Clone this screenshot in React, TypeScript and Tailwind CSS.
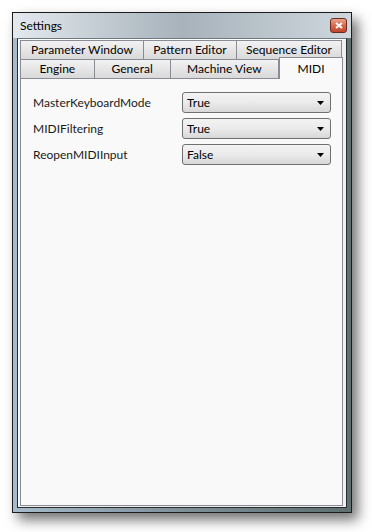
import React from "react";

const font = { fontFamily: 'Lato, "Noto Sans", sans-serif' };

function Tab({ label, w, selected }: { label: string; w: string; selected?: boolean }) {
  return (
    <div
      className={
        selected
          ? `${w} h-[22px] -mt-[2px] -mb-[1px] relative z-10 bg-[#f9f9f9] border border-b-0 border-[#898c95] flex items-center justify-center text-[12px] text-black`
          : `${w} h-[20px] bg-gradient-to-b from-[#f2f2f2] to-[#d9d9d9] border border-[#898c95] -ml-px first:ml-0 flex items-center justify-center text-[12px] text-black`
      }
    >
      {label}
    </div>
  );
}

function Select({ value }: { value: string }) {
  return (
    <div className="w-[149px] h-[21px] rounded-[3px] border border-[#707070] bg-gradient-to-b from-[#f3f3f3] via-[#ebebeb] to-[#d8d8d8] flex items-center justify-between pl-[4px] pr-[6px] text-[12px] text-black">
      <span>{value}</span>
      <svg width="7" height="4" viewBox="0 0 7 4">
        <path d="M0 0 H7 L3.5 4 Z" fill="#000" />
      </svg>
    </div>
  );
}

export default function App() {
  const rows = [
    ["MasterKeyboardMode", "True"],
    ["MIDIFiltering", "True"],
    ["ReopenMIDIInput", "False"],
  ];
  return (
    <div className="w-[372px] h-[532px] bg-white pt-[12px] pl-[12px]" style={font}>
      <div className="w-[340px] h-[501px] border border-[#1c1c1c] bg-gradient-to-r from-[#a6bccd] via-[#7f9099] to-[#5e7070] shadow-[6px_7px_12px_rgba(0,0,0,0.55)] flex flex-col">
        <div className="h-[25px] flex items-center justify-between pl-[7px] pr-[4px] bg-gradient-to-r from-[#e3e9ee] via-[#a7b2ba] to-[#cfd7dd]">
          <span className="text-[12px] text-black">Settings</span>
          <div className="w-[17px] h-[15px] rounded-[3px] border border-[#6a2a1c] bg-gradient-to-b from-[#e9a48c] via-[#d56a4c] to-[#c0452c] flex items-center justify-center">
            <svg width="8" height="7" viewBox="0 0 8 7">
              <path d="M1 1 L7 6 M7 1 L1 6" stroke="#fff" strokeWidth="1.8" />
            </svg>
          </div>
        </div>
        <div className="flex-1 mx-[4px] mb-[4px] border border-[#2a2a2a] bg-[#f0f0f0] border-t-[#6d7a82]">
          <div className="h-full border-l border-t border-white pl-[1px] pr-[3px] pt-[0px] pb-[1px] flex flex-col">
            <div className="flex pt-[0px]">
              <Tab label="Parameter Window" w="w-[124px]" />
              <Tab label="Pattern Editor" w="w-[94px]" />
              <Tab label="Sequence Editor" w="w-[106px]" />
            </div>
            <div className="flex -mt-px">
              <Tab label="Engine" w="w-[75px]" />
              <Tab label="General" w="w-[77px]" />
              <Tab label="Machine View" w="w-[110px]" />
              <Tab label="MIDI" w="w-[64px]" selected />
            </div>
            <div className="flex-1 -mt-px border border-[#898c95] bg-[#f9f9f9] pt-[13px] pl-[12px]">
              <div className="flex flex-col gap-[5px]">
                {rows.map(([k, v]) => (
                  <div key={k} className="flex items-center">
                    <span className="w-[149px] text-[12px] text-[#1a1a1a]">{k}</span>
                    <Select value={v} />
                  </div>
                ))}
              </div>
            </div>
          </div>
        </div>
      </div>
    </div>
  );
}
